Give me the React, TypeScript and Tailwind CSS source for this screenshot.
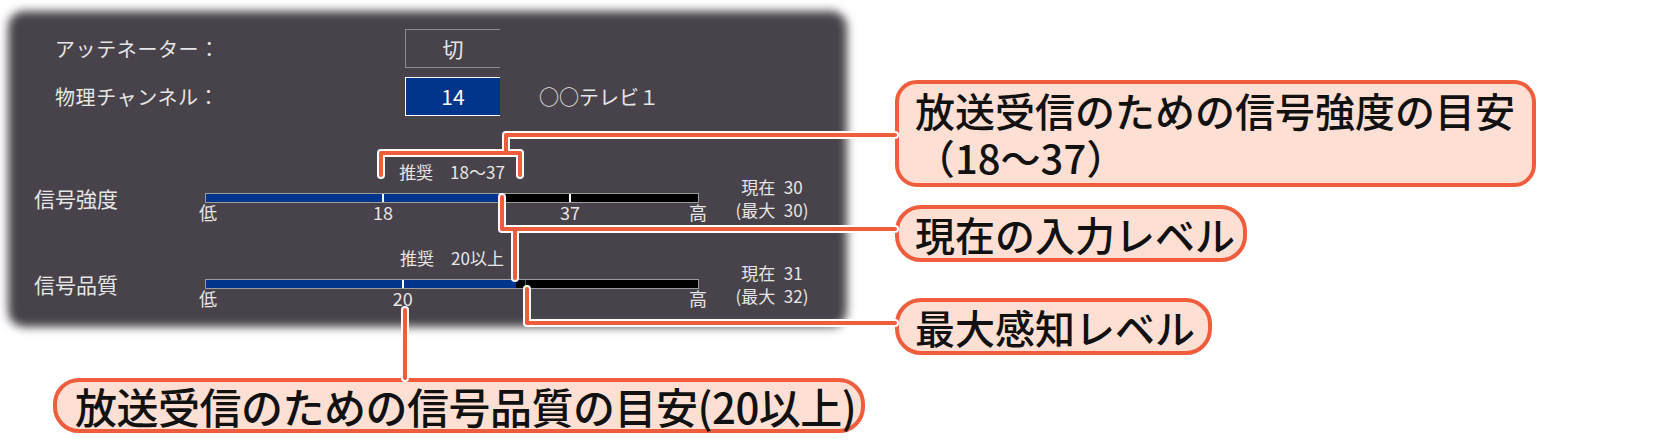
const FONT = "font-['Noto_Sans_CJK_JP','Noto_Sans',sans-serif]";

type Meter = {
  label: string;
  hint: string;
  ticks: { pct: number; text: string }[];
  fill: number;
  peak?: number;
  now: number;
  max: number;
};

const METERS: Meter[] = [
  {
    label: "信号強度",
    hint: "推奨　18～37",
    ticks: [
      { pct: 36, text: "18" },
      { pct: 74, text: "37" },
    ],
    fill: 60,
    now: 30,
    max: 30,
  },
  {
    label: "信号品質",
    hint: "推奨　20以上",
    ticks: [{ pct: 40, text: "20" }],
    fill: 63,
    peak: 64.8,
    now: 31,
    max: 32,
  },
];

// leader lines: white halo under an orange stroke
const LEADERS = [
  "M381 175 V153 H520 V175",
  "M506 153 V135 H895",
  "M502 197 V229 H895",
  "M515 229 V278",
  "M527 289 V323 H895",
  "M405 310 V378",
];

function MeterRow({ m, className = "" }: { m: Meter; className?: string }) {
  return (
    <div className={`flex flex-col ${className}`}>
      <div className="ml-[190px] w-[494px] text-center text-[17px] leading-[20px]">{m.hint}</div>
      <div className="flex h-[32px] items-center">
        <div className="w-[190px] pl-[19px] text-[21px] leading-[26px]">{m.label}</div>
        <div className="relative h-[10px] w-[494px] border border-[#9c9c9c] bg-black">
          <div className="h-full bg-[#00358c]" style={{ width: `${m.fill}%` }} />
          {m.peak !== undefined && (
            <div className="absolute top-0 h-full w-px bg-[#2456b8]" style={{ left: `${m.peak}%` }} />
          )}
          {m.ticks.map((t) => (
            <div
              key={t.text}
              className="absolute top-0 h-full w-[2px] -translate-x-1/2 bg-white"
              style={{ left: `${t.pct}%` }}
            />
          ))}
          <span className="absolute left-[2px] top-full -translate-x-1/2 text-[18px] leading-[20px]">低</span>
          {m.ticks.map((t) => (
            <span
              key={t.text}
              className="absolute top-full -translate-x-1/2 text-[18px] leading-[20px]"
              style={{ left: `${t.pct}%` }}
            >
              {t.text}
            </span>
          ))}
          <span className="absolute left-full top-full -translate-x-1/2 text-[18px] leading-[20px]">高</span>
        </div>
        <div className="ml-[23px] w-[100px] text-center text-[17px] leading-[23px]">
          <div>現在{"\u2002"}{m.now}</div>
          <div>(最大{"\u2002"}{m.max})</div>
        </div>
      </div>
    </div>
  );
}

function Callout({ className, children }: { className: string; children: React.ReactNode }) {
  return (
    <div
      className={`flex items-center rounded-[22px] border-4 border-[#ef5d3c] bg-[#fde0d3] pl-[16px] text-[40px] font-medium text-[#111] ${className}`}
    >
      {children}
    </div>
  );
}

export default function App() {
  return (
    <div className={`relative flex h-[440px] w-[1654px] flex-col overflow-hidden bg-white ${FONT}`}>
      <div className="flex items-start">
        <div className="relative ml-[15px] mt-[18px] flex h-[302px] w-[825px] flex-col pt-[11px] text-[#e6e6e6]">
          {/* soft-edged backdrop */}
          <div className="absolute -inset-[7px] rounded-[16px] bg-[#48434a] blur-[5px]" />
          <div className="relative flex h-[39px] items-center">
            <div className="w-[390px] pl-[40px] text-[20px] tracking-[0.6px]">アッテネーター：</div>
            <div className="flex h-full w-[95px] items-center justify-center border-y border-l border-[#8e8e8e] text-[21px]">
              切
            </div>
          </div>
          <div className="relative mt-[9px] flex h-[39px] items-center">
            <div className="w-[390px] pl-[40px] text-[20px] tracking-[0.6px]">物理チャンネル：</div>
            <div className="flex h-full w-[95px] items-center justify-center border-y border-l border-white bg-[#00358c] text-[21px] text-white">
              14
            </div>
            <div className="ml-[39px] text-[20px]">○○テレビ１</div>
          </div>
          <MeterRow m={METERS[0]} className="relative mt-[46px]" />
          <MeterRow m={METERS[1]} className="relative mt-[34px]" />
        </div>

        <div className="ml-[55px] mt-[80px] flex flex-col items-start">
          <Callout className="h-[107px] w-[641px]">
            <div className="flex flex-col">
              <div className="h-[47px] leading-[47px]">放送受信のための信号強度の目安</div>
              <div className="h-[47px] leading-[47px]">（18～37）</div>
            </div>
          </Callout>
          <Callout className="mt-[18px] h-[57px] w-[352px] rounded-[26px]">現在の入力レベル</Callout>
          <Callout className="mt-[36px] h-[57px] w-[317px] rounded-[26px]">最大感知レベル</Callout>
        </div>
      </div>

      <Callout className="ml-[53px] mt-[23px] h-[55px] w-[812px] rounded-[26px] pl-[18px] text-[42px] tracking-[-0.5px]">
        放送受信のための信号品質の目安(20以上)
      </Callout>

      <svg className="pointer-events-none absolute inset-0" width="1654" height="440" fill="none">
        {LEADERS.map((d) => (
          <path key={`w${d}`} d={d} stroke="#fff" strokeWidth="8" strokeLinecap="round" strokeLinejoin="round" />
        ))}
        {LEADERS.map((d) => (
          <path key={`o${d}`} d={d} stroke="#ef5d3c" strokeWidth="4" strokeLinecap="round" strokeLinejoin="round" />
        ))}
      </svg>
    </div>
  );
}
